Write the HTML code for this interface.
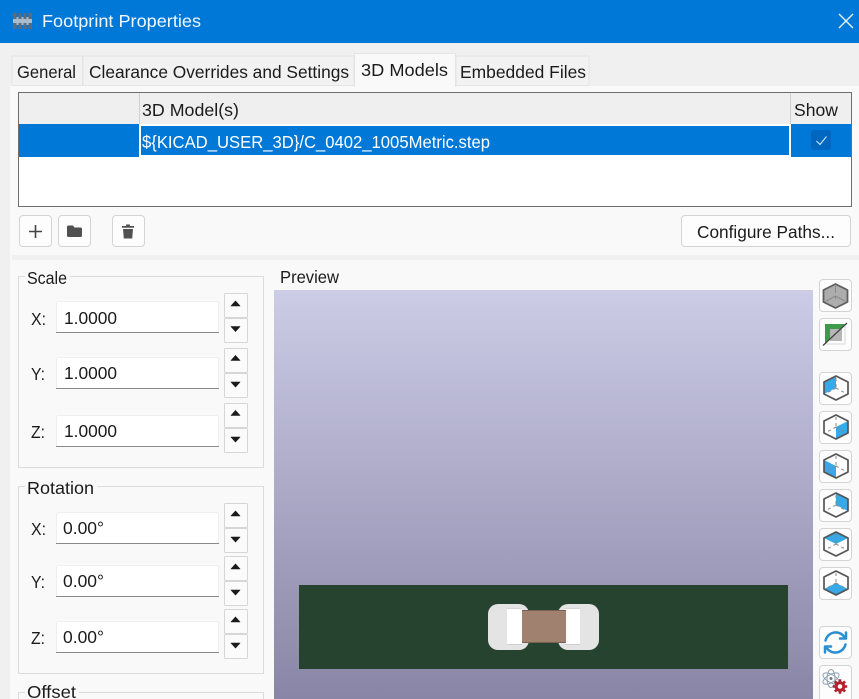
<!DOCTYPE html>
<html><head><meta charset="utf-8"><title>Footprint Properties</title>
<style>
html,body{margin:0;padding:0;width:859px;height:699px;overflow:hidden;background:#f0f0f0}
svg{display:block}
text{font-family:"Liberation Sans",sans-serif;font-size:17.5px;fill:#1b1b1b}
.b{fill:#fdfdfd;stroke:#d4d4d4;stroke-width:1}
.i{fill:#fff;stroke:#efefef;stroke-width:1}
.l{fill:#8a8a8a}
.g{fill:none;stroke:#dcdcdc;stroke-width:1}
.s{fill:#fbfbfb;stroke:#d6d6d6;stroke-width:1}
.h{fill:none;stroke:#555;stroke-width:1.700;stroke-linejoin:round}
.d{fill:none;stroke:#888;stroke-width:1;stroke-dasharray:3 3}
.f{fill:#37a8e8}
</style></head><body>
<svg width="859" height="699" viewBox="0 0 859 699" xmlns="http://www.w3.org/2000/svg">
<defs>
<g id="hex"><path class="d" d="M0-10V0M0 0L-10 5.500M0 0L10 5.500"/><path class="h" d="M0-12L12-6V6L0 12L-12 6V-6Z"/></g>
<g id="up"><path d="M-4.500 2.500L0-2.500L4.500 2.500Z" fill="#1b1b1b" stroke="#1b1b1b" stroke-width=".6" stroke-linejoin="round"/></g>
<g id="dn"><path d="M-4.500-2.500L0 2.500L4.500-2.500Z" fill="#1b1b1b" stroke="#1b1b1b" stroke-width=".6" stroke-linejoin="round"/></g>
</defs>

<!-- base -->
<rect width="859" height="699" fill="#f0f0f0"/>
<rect width="859" height="43" fill="#0078d7"/>

<!-- title icon -->
<rect x="13" y="17" width="19" height="8" fill="#a9bccd"/>
<path d="M13 13h3.500v6H13zM18.500 13h3v6h-3zM23.500 13h3v6h-3zM28.500 13H32v6h-3.500zM13 23h3.500v6H13zM18.500 23h3v6h-3zM23.500 23h3v6h-3zM28.500 23H32v6h-3.500z" fill="#5d6c7a"/>
<text x="42" y="27" textLength="159" lengthAdjust="spacingAndGlyphs" style="fill:#f2f8fd">Footprint Properties</text>
<path d="M839 14L853 28M853 14L839 28" stroke="#eaf4fb" stroke-width="1.400" fill="none"/>

<!-- panel -->
<rect x="10" y="86" width="849" height="613" fill="#f9f9f9"/>

<!-- tabs -->
<rect x="12" y="56" width="70.500" height="29.500" fill="#f2f2f2" stroke="#e4e4e4"/>
<rect x="83" y="56" width="271" height="29.500" fill="#f2f2f2" stroke="#e4e4e4"/>
<rect x="456" y="56" width="133" height="29.500" fill="#f2f2f2" stroke="#e4e4e4"/>
<rect x="354.500" y="53.500" width="101" height="33" fill="#f9f9f9" stroke="#e4e4e4"/>
<rect x="355" y="84" width="100" height="3" fill="#f9f9f9"/>
<text x="17" y="78" textLength="59" lengthAdjust="spacingAndGlyphs">General</text>
<text x="89" y="78" textLength="260" lengthAdjust="spacingAndGlyphs">Clearance Overrides and Settings</text>
<text x="361" y="76" textLength="87" lengthAdjust="spacingAndGlyphs">3D Models</text>
<text x="460" y="78" textLength="126" lengthAdjust="spacingAndGlyphs">Embedded Files</text>

<!-- table -->
<rect x="18.500" y="92.500" width="833" height="114" fill="#fff" stroke="#6e6e6e"/>
<rect x="19" y="93" width="832" height="31" fill="#efefef"/>
<rect x="139" y="93" width="1" height="31" fill="#d0d0d0"/>
<rect x="790" y="93" width="1" height="31" fill="#d0d0d0"/>
<rect x="19" y="124" width="120" height="33" fill="#0078d7"/>
<rect x="141" y="126" width="648" height="29" fill="#0078d7"/>
<rect x="791" y="124" width="60" height="33" fill="#0078d7"/>
<rect x="811" y="130" width="20" height="20" rx="3" fill="#0067c0"/>
<path d="M816.500 141L820 144.500L826.500 136.500" fill="none" stroke="#cfe6f7" stroke-width="1.100"/>
<text x="142" y="116" textLength="97" lengthAdjust="spacingAndGlyphs">3D Model(s)</text>
<text x="794" y="116" textLength="44" lengthAdjust="spacingAndGlyphs">Show</text>
<text x="142" y="148" textLength="348" lengthAdjust="spacingAndGlyphs" style="fill:#fff">${KICAD_USER_3D}/C_0402_1005Metric.step</text>

<!-- buttons -->
<rect class="b" x="19.500" y="215.500" width="32" height="31" rx="3.500"/>
<rect class="b" x="58.500" y="215.500" width="32" height="31" rx="3.500"/>
<rect class="b" x="112.500" y="215.500" width="32" height="31" rx="3.500"/>
<rect class="b" x="681.500" y="215.500" width="169" height="31" rx="3.500"/>
<path d="M29 231.500H42M35.500 225V238" stroke="#444" stroke-width="1.600" fill="none"/>
<path d="M67 227a1.500 1.500 0 0 1 1.500-1.500H73l1.500 2h6a1.500 1.500 0 0 1 1.500 1.500v6.500a1.500 1.500 0 0 1-1.500 1.500h-12a1.500 1.500 0 0 1-1.500-1.500Z" fill="#505050"/>
<path d="M122 226h12v1.800h-12zM126 224.500h4v1.500h-4zM123 229h10l-.8 9.500h-8.400Z" fill="#505050"/>
<text x="697" y="238" textLength="138" lengthAdjust="spacingAndGlyphs">Configure Paths...</text>

<!-- separator -->
<rect x="12" y="255" width="847" height="5" fill="#f0f0f0"/>

<!-- Scale group -->
<rect class="g" x="18.500" y="276.500" width="245" height="191"/>
<rect x="25" y="270" width="45" height="14" fill="#f9f9f9"/>
<text x="27" y="284" textLength="40" lengthAdjust="spacingAndGlyphs">Scale</text>

<rect class="i" x="56.500" y="301.500" width="162" height="31" rx="2"/><rect class="l" x="56" y="332" width="163" height="1"/>
<rect class="i" x="56.500" y="357.500" width="162" height="31" rx="2"/><rect class="l" x="56" y="388" width="163" height="1"/>
<rect class="i" x="56.500" y="415.500" width="162" height="31" rx="2"/><rect class="l" x="56" y="446" width="163" height="1"/>
<text x="31" y="325" textLength="15" lengthAdjust="spacingAndGlyphs">X:</text>
<text x="31" y="380" textLength="14" lengthAdjust="spacingAndGlyphs">Y:</text>
<text x="31" y="438" textLength="14" lengthAdjust="spacingAndGlyphs">Z:</text>
<text x="64" y="324" textLength="53" lengthAdjust="spacingAndGlyphs">1.0000</text>
<text x="64" y="379" textLength="53" lengthAdjust="spacingAndGlyphs">1.0000</text>
<text x="64" y="437" textLength="53" lengthAdjust="spacingAndGlyphs">1.0000</text>

<rect class="s" x="224.500" y="293.500" width="23" height="24" rx="1"/><rect class="s" x="224.500" y="318.500" width="23" height="24" rx="1"/>
<rect class="s" x="224.500" y="348.500" width="23" height="24" rx="1"/><rect class="s" x="224.500" y="373.500" width="23" height="24" rx="1"/>
<rect class="s" x="224.500" y="403.500" width="23" height="24" rx="1"/><rect class="s" x="224.500" y="428.500" width="23" height="24" rx="1"/>
<use href="#up" x="235.500" y="303.500"/><use href="#dn" x="235.500" y="329"/>
<use href="#up" x="235.500" y="358"/><use href="#dn" x="235.500" y="384.500"/>
<use href="#up" x="235.500" y="413"/><use href="#dn" x="235.500" y="439.500"/>

<!-- Rotation group -->
<rect class="g" x="18.500" y="486.500" width="245" height="187"/>
<rect x="25" y="480" width="72" height="14" fill="#f9f9f9"/>
<text x="27" y="494" textLength="67" lengthAdjust="spacingAndGlyphs">Rotation</text>

<rect class="i" x="56.500" y="512.500" width="162" height="31" rx="2"/><rect class="l" x="56" y="543" width="163" height="1"/>
<rect class="i" x="56.500" y="565.500" width="162" height="31" rx="2"/><rect class="l" x="56" y="596" width="163" height="1"/>
<rect class="i" x="56.500" y="621.500" width="162" height="31" rx="2"/><rect class="l" x="56" y="652" width="163" height="1"/>
<text x="31" y="535" textLength="15" lengthAdjust="spacingAndGlyphs">X:</text>
<text x="31" y="588" textLength="14" lengthAdjust="spacingAndGlyphs">Y:</text>
<text x="31" y="644" textLength="14" lengthAdjust="spacingAndGlyphs">Z:</text>
<text x="63" y="534" textLength="41" lengthAdjust="spacingAndGlyphs">0.00°</text>
<text x="63" y="587" textLength="41" lengthAdjust="spacingAndGlyphs">0.00°</text>
<text x="63" y="643" textLength="41" lengthAdjust="spacingAndGlyphs">0.00°</text>

<rect class="s" x="224.500" y="503.500" width="23" height="24" rx="1"/><rect class="s" x="224.500" y="528.500" width="23" height="24" rx="1"/>
<rect class="s" x="224.500" y="556.500" width="23" height="24" rx="1"/><rect class="s" x="224.500" y="581.500" width="23" height="24" rx="1"/>
<rect class="s" x="224.500" y="609.500" width="23" height="24" rx="1"/><rect class="s" x="224.500" y="634.500" width="23" height="24" rx="1"/>
<use href="#up" x="235.500" y="513.500"/><use href="#dn" x="235.500" y="539.500"/>
<use href="#up" x="235.500" y="566.500"/><use href="#dn" x="235.500" y="592.500"/>
<use href="#up" x="235.500" y="619.500"/><use href="#dn" x="235.500" y="645.500"/>

<!-- Offset group -->
<rect class="g" x="18.500" y="692.500" width="245" height="20"/>
<rect x="25" y="685" width="54" height="14" fill="#f9f9f9"/>
<text x="27" y="698" textLength="49" lengthAdjust="spacingAndGlyphs">Offset</text>

<!-- Preview -->
<text x="280" y="283" textLength="59" lengthAdjust="spacingAndGlyphs">Preview</text>
<linearGradient id="sky" x1="0" y1="0" x2="0" y2="1"><stop offset="0" stop-color="#cccce6"/><stop offset="1" stop-color="#8985a6"/></linearGradient>
<rect x="274" y="290" width="539" height="409" fill="url(#sky)"/>
<rect x="299" y="585" width="489" height="84" fill="#26432f"/>
<rect x="488" y="604" width="41" height="46" rx="10" fill="#e4e4e4"/>
<rect x="558" y="604" width="41" height="46" rx="10" fill="#e4e4e4"/>
<rect x="507" y="608" width="15" height="37" fill="#fff"/>
<rect x="565" y="608" width="15" height="37" fill="#fff"/>
<rect x="507" y="608" width="15" height="1" fill="#d6d6d6"/>
<rect x="565" y="608" width="15" height="1" fill="#d6d6d6"/>
<rect x="507" y="644" width="15" height="1" fill="#cfcfcf"/>
<rect x="565" y="644" width="15" height="1" fill="#cfcfcf"/>
<rect x="522" y="610" width="44" height="33" fill="#a0806e"/>
<rect x="522" y="610" width="44" height="1" fill="#7a6052"/>
<rect x="522" y="642" width="44" height="1" fill="#7a6052"/>

<!-- right toolbar -->
<rect class="b" x="819.500" y="279.500" width="32" height="32" rx="3.500"/>
<rect class="b" x="819.500" y="318.500" width="32" height="32" rx="3.500"/>
<rect class="b" x="819.500" y="372.500" width="32" height="32" rx="3.500"/>
<rect class="b" x="819.500" y="411.500" width="32" height="32" rx="3.500"/>
<rect class="b" x="819.500" y="450.500" width="32" height="32" rx="3.500"/>
<rect class="b" x="819.500" y="489.500" width="32" height="32" rx="3.500"/>
<rect class="b" x="819.500" y="528.500" width="32" height="32" rx="3.500"/>
<rect class="b" x="819.500" y="567.500" width="32" height="32" rx="3.500"/>
<rect class="b" x="819.500" y="626.500" width="32" height="32" rx="3.500"/>
<rect class="b" x="819.500" y="665.500" width="32" height="40" rx="3.500"/>

<g transform="translate(835.500 296)"><path d="M0-12L12-6V6L0 12L-12 6V-6Z" fill="#adadad" stroke="#5e5e5e" stroke-width="1.800" stroke-linejoin="round"/><path d="M0-10V-3M-10 5.500L0 0L10 5.500M0 0V3" fill="none" stroke="#8a8a8a"/></g>

<g transform="translate(835 334)">
<path d="M-10-10H10L-10 10Z" fill="#3f9a4a"/>
<rect x="-5" y="-5" width="12" height="12" fill="#b6b6b6"/>
<path d="M10-10V10H-10" fill="none" stroke="#d8d8d8"/>
<path d="M-12 11.500L12-11" stroke="#444" stroke-width="1.300"/>
</g>

<g transform="translate(836 388)"><path class="f" d="M0-12V0L-12 6V-6Z"/><use href="#hex"/></g>
<g transform="translate(836 427)"><path class="f" d="M0 0L12-6V6L0 12Z"/><use href="#hex"/></g>
<g transform="translate(836 466)"><path class="f" d="M0 0L-12-6V6L0 12Z"/><use href="#hex"/></g>
<g transform="translate(836 505)"><path class="f" d="M0-12L12-6V6L0 0Z"/><use href="#hex"/></g>
<g transform="translate(836 544)"><path class="f" d="M0-12L12-6L0 0L-12-6Z"/><use href="#hex"/></g>
<g transform="translate(836 583)"><path class="f" d="M0 12L12 6L0 0L-12 6Z"/><use href="#hex"/></g>

<g transform="translate(835.500 642.500)" fill="none" stroke="#2c8fd0" stroke-width="2.500" stroke-linecap="round" stroke-linejoin="round">
<path d="M-10-2A10.500 10.500 0 0 1 8.500-6"/><path d="M10.500-10V-4H4.500"/>
<path d="M10 2A10.500 10.500 0 0 1-8.500 6"/><path d="M-10.500 10V4H-4.500"/>
</g>

<g transform="translate(831 678.500)" fill="none" stroke="#8fa3b3" stroke-width="1">
<ellipse rx="9" ry="4" transform="rotate(30)"/><ellipse rx="9" ry="4" transform="rotate(-30)"/><ellipse rx="4" ry="9"/>
<circle r="1.500" fill="#777" stroke="none"/>
</g>
<g transform="translate(840 686.500)">
<circle r="3.800" fill="none" stroke="#b3202e" stroke-width="3"/>
<path d="M-1.300-7.200h2.600v3h-2.600zM-1.300 4.200h2.600v3h-2.600zM-7.200-1.300h3v2.600h-3zM4.200-1.300h3v2.600h-3z" fill="#b3202e"/>
<path d="M-1.300-7.200h2.600v3h-2.600zM-1.300 4.200h2.600v3h-2.600zM-7.200-1.300h3v2.600h-3zM4.200-1.300h3v2.600h-3z" fill="#b3202e" transform="rotate(45)"/>
</g>
</svg>
</body></html>
